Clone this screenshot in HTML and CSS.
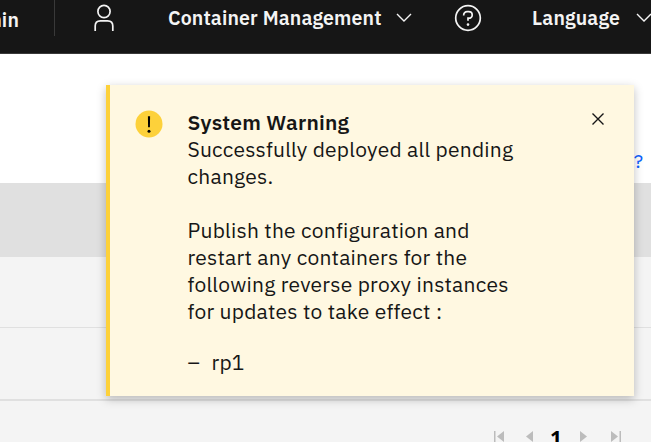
FILE: index.html
```html
<!DOCTYPE html>
<html lang="en">
<head>
<meta charset="utf-8">
<title>Container Management</title>
<link rel="stylesheet" href="styles.css">
</head>
<body>
<header class="header">
  <div class="brand"><span>Admin</span></div>
  <svg class="user" width="22" height="28" viewBox="0 0 22 28" fill="none" stroke="#f4f4f4" stroke-width="1.7"><circle cx="11" cy="7.5" r="6.1"/><path d="M2.2 27v-5c0-3.2 2.2-5.2 5.2-5.2h7.2c3 0 5.2 2 5.2 5.2v5"/></svg>
  <span class="menu menu-management">Container Management</span>
  <svg class="chevron" width="16" height="10" viewBox="0 0 16 10" fill="none" stroke="#f4f4f4" stroke-width="1.4"><path d="M1 1l7 7 7-7"/></svg>
  <svg class="help" width="28" height="28" viewBox="0 0 28 28" fill="none" stroke="#f4f4f4" stroke-width="1.7"><circle cx="14" cy="14" r="12.3"/><path d="M9.7 11.4V11c0-2 1.5-3.4 3.4-3.4h1.6c2 0 3.5 1.4 3.5 3.3s-1.5 3.3-3.5 3.3H14v2.6"/><circle cx="14" cy="20.6" r="1.3" fill="#f4f4f4" stroke="none"/></svg>
  <span class="menu menu-language">Language</span>
  <svg class="chevron" width="16" height="10" viewBox="0 0 16 10" fill="none" stroke="#f4f4f4" stroke-width="1.4"><path d="M1 1l7 7 7-7"/></svg>
</header>
<main class="page">
  <div class="toolbar"><a class="help-link">?</a></div>
  <div class="table-head"></div>
  <div class="row"></div>
  <div class="row row-last"></div>
  <nav class="pager">
    <svg width="12" height="12" viewBox="0 0 12 12" fill="#bcbcbc"><path d="M1 1h1.5v11H1zM11 1v11L4 6.5z"/></svg>
    <svg width="12" height="12" viewBox="0 0 12 12" fill="#bcbcbc"><path d="M10 1v11L3 6.5z"/></svg>
    <b class="page-number">1</b>
    <svg width="12" height="12" viewBox="0 0 12 12" fill="#bcbcbc"><path d="M2 1v11l7-5.500z"/></svg>
    <svg width="12" height="12" viewBox="0 0 12 12" fill="#bcbcbc"><path d="M1 1v11l7-5.500zM9.500 1H11v11H9.500z"/></svg>
  </nav>
</main>
<section class="toast">
  <svg class="warning" width="28" height="28" viewBox="0 0 28 28"><circle cx="14" cy="14" r="13.500" fill="#fdd13a"/><path d="M12.900 6.300h2.200l-.2 11h-1.800z"/><circle cx="14" cy="21.300" r="1.500"/></svg>
  <div class="message">
    <h1 class="title">System Warning</h1>
    <p class="text">Successfully deployed all pending changes.</p>
    <p class="text details">Publish the configuration and restart any containers for the following reverse proxy instances for updates to take effect :</p>
    <ul class="instances"><li><span class="dash">–</span><span>rp1</span></li></ul>
  </div>
  <svg class="close" width="14" height="14" viewBox="0 0 14 14" stroke="#161616" stroke-width="1.400"><path d="M1.500 1.500l11 11M12.500 1.500l-11 11"/></svg>
</section>
</body>
</html>
```
FILE: styles.css
```css
* { box-sizing: border-box; }
body { margin: 0; width: 651px; height: 442px; overflow: hidden; background: #fff; color: #161616; font-family: "IBM Plex Sans", Roboto, "Liberation Sans", sans-serif; }
svg { display: block; flex: none; }
.header { display: flex; align-items: flex-start; height: 54px; background: #161616; border-bottom: 1px solid #393939; color: #f4f4f4; white-space: nowrap; }
.brand { flex: none; display: flex; justify-content: flex-end; width: 55px; height: 36px; padding: 7px 35px 0 0; border-right: 1px solid #393939; font-size: 19.5px; letter-spacing: .15px; font-weight: 600; line-height: 26px; }
.user { margin: 4px 0 0 38px; }
.menu { flex: none; margin-top: 5px; font-size: 19.5px; letter-spacing: .15px; font-weight: 600; line-height: 26px; }
.menu-management { width: 228px; margin-left: 53px; }
.menu-language { width: 104px; margin-left: 50px; }
.chevron { margin-top: 13px; }
.help { margin: 4px 0 0 42px; }
.toolbar { display: flex; justify-content: flex-end; height: 129px; padding: 95px 8px 0 0; }
.help-link { color: #0f62fe; font-size: 19.5px; line-height: 24px; }
.table-head { height: 74px; background: #e0e0e0; }
.row { height: 71px; background: #f4f4f4; border-bottom: 1px solid #e0e0e0; }
.row-last { height: 73px; border-bottom: 2px solid #e0e0e0; }
.pager { display: flex; height: 41px; padding: 29px 0 0 493px; background: #f4f4f4; }
.pager svg:nth-child(2) { margin-left: 18px; }
.pager svg:nth-child(4) { margin-left: 16px; }
.pager svg:nth-child(5) { margin-left: 20px; }
.page-number { width: 12px; margin: -4px 0 0 15px; font-family: "Open Sans", sans-serif; font-size: 21px; line-height: 24px; text-align: center; color: #000; }
.toast { position: absolute; left: 106px; top: 85px; display: flex; width: 528px; height: 311px; padding-left: 25px; background: #fff8e1; border-left: 4px solid #fdd13a; box-shadow: 0 3px 9px rgba(0,0,0,.25); }
.warning { margin: 25px 25px 0 0; }
.message { width: 350px; padding: 24px 20px 0 0; margin-left: -.5px; font-size: 21px; letter-spacing: .24px; line-height: 27px; }
.title { margin: 0; font-size: inherit; font-weight: 600; }
.text { margin: 0; }
.details { margin-top: 27px; }
.instances { margin: 24px 0 0; padding: 0; list-style: none; }
.instances li { display: flex; }
.dash { width: 24px; }
.close { margin: 27px 0 0 53.500px; }
```
